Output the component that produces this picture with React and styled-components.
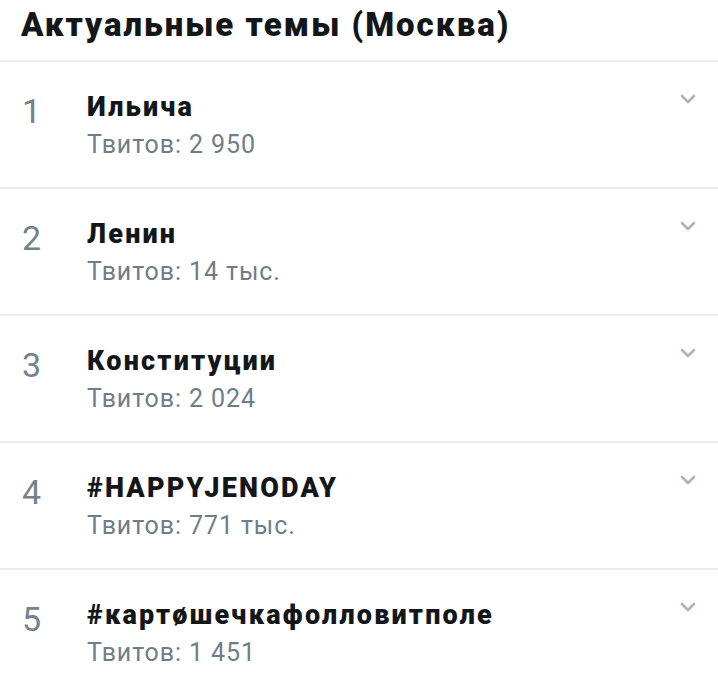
import styled, { createGlobalStyle } from "styled-components";

const GlobalStyle = createGlobalStyle`
    body {
        margin: 0;
        background: #ffffff;
        font-family: Roboto, "Noto Sans", sans-serif;
    }
`;

const Container = styled.div`
    width: 718px;
    background: #ffffff;
`;

const Header = styled.div`
    height: 62px;
    padding-left: 21px;
    display: flex;
    align-items: center;
    border-bottom: 2px solid #e8ecef;
    box-sizing: border-box;
`;

const Title = styled.h1`
    margin: 0 0 12px 0;
    font-size: 33px;
    font-weight: 900;
    color: #14171a;
    letter-spacing: 2px;
`;

const Row = styled.div`
    display: flex;
    align-items: flex-start;
    height: 127px;
    box-sizing: border-box;
    padding-top: 30px;
    border-bottom: ${(p) => (p.last ? "none" : "2px solid #e8ecef")};
`;

const Rank = styled.div`
    width: 87px;
    padding-left: 22px;
    box-sizing: border-box;
    font-size: 34px;
    line-height: 40px;
    margin-top: -1px;
    color: #74828d;
    font-weight: 400;
`;

const Body = styled.div`
    flex: 1;
    display: flex;
    flex-direction: column;
    gap: 8px;
`;

const Topic = styled.div`
    font-size: 27px;
    line-height: 30px;
    font-weight: 900;
    color: #14171a;
    letter-spacing: 2.2px;
`;

const Count = styled.div`
    font-size: 25px;
    line-height: 30px;
    color: #6f7d88;
    letter-spacing: 0.9px;
`;

const Chevron = styled.div`
    width: 16px;
    margin-top: 2px;
    margin-right: 22px;
    display: flex;
`;

const trends = [
    { name: "Ильича", count: "Твитов: 2 950" },
    { name: "Ленин", count: "Твитов: 14 тыс." },
    { name: "Конституции", count: "Твитов: 2 024" },
    { name: "#HAPPYJENODAY", count: "Твитов: 771 тыс." },
    { name: "#картøшечкафолловитполе", count: "Твитов: 1 451" },
];

const App = () => {
    return (
        <Container>
            <GlobalStyle />
            <Header>
                <Title>Актуальные темы (Москва)</Title>
            </Header>
            {trends.map((t, i) => (
                <Row key={t.name} last={i === trends.length - 1}>
                    <Rank>{i + 1}</Rank>
                    <Body>
                        <Topic>{t.name}</Topic>
                        <Count>{t.count}</Count>
                    </Body>
                    <Chevron>
                        <svg width="16" height="10" viewBox="0 0 16 10">
                            <path d="M2 2 L8 8 L14 2" fill="none" stroke="#aab5be" strokeWidth="2.6" strokeLinecap="round" strokeLinejoin="round" />
                        </svg>
                    </Chevron>
                </Row>
            ))}
        </Container>
    );
};

export default App;
